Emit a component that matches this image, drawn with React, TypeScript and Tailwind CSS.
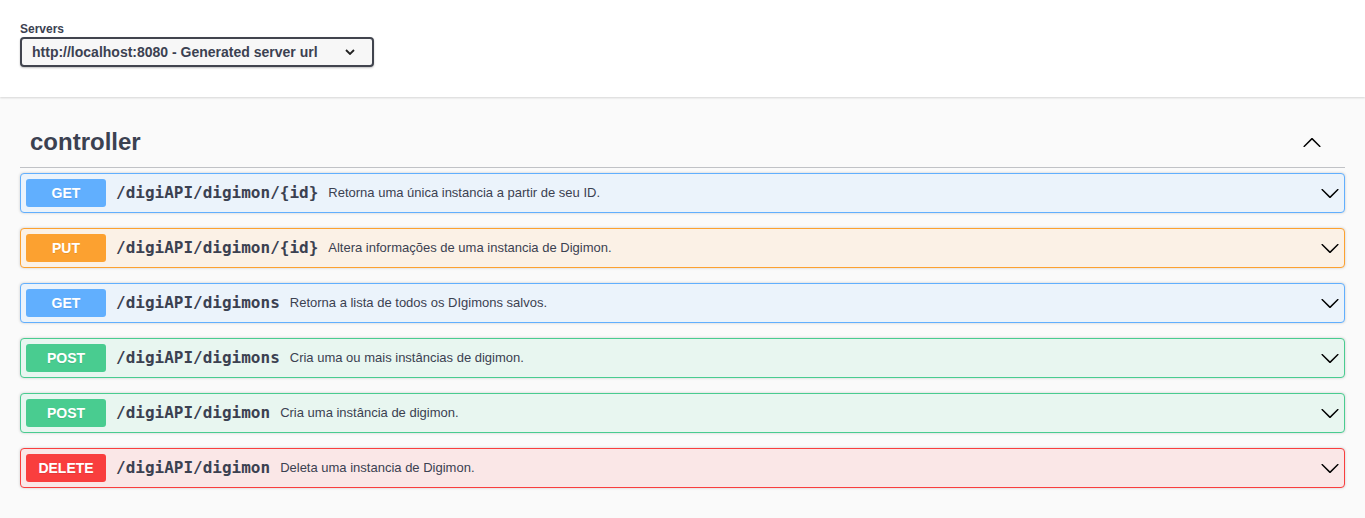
import React from "react";

type Op = {
  method: string;
  path: string;
  desc: string;
  border: string;
  bg: string;
  badge: string;
};

const ops: Op[] = [
  { method: "GET", path: "/digiAPI/digimon/{id}", desc: "Retorna uma única instancia a partir de seu ID.", border: "border-[#61affe]", bg: "bg-[#ebf3fb]", badge: "bg-[#61affe]" },
  { method: "PUT", path: "/digiAPI/digimon/{id}", desc: "Altera informações de uma instancia de Digimon.", border: "border-[#fca130]", bg: "bg-[#fbf1e6]", badge: "bg-[#fca130]" },
  { method: "GET", path: "/digiAPI/digimons", desc: "Retorna a lista de todos os DIgimons salvos.", border: "border-[#61affe]", bg: "bg-[#ebf3fb]", badge: "bg-[#61affe]" },
  { method: "POST", path: "/digiAPI/digimons", desc: "Cria uma ou mais instâncias de digimon.", border: "border-[#49cc90]", bg: "bg-[#e8f6f0]", badge: "bg-[#49cc90]" },
  { method: "POST", path: "/digiAPI/digimon", desc: "Cria uma instância de digimon.", border: "border-[#49cc90]", bg: "bg-[#e8f6f0]", badge: "bg-[#49cc90]" },
  { method: "DELETE", path: "/digiAPI/digimon", desc: "Deleta uma instancia de Digimon.", border: "border-[#f93e3e]", bg: "bg-[#fae7e7]", badge: "bg-[#f93e3e]" },
];

function ArrowDown() {
  return (
    <svg width="20" height="20" viewBox="0 0 20 20" className="shrink-0">
      <path
        fill="#000"
        d="M17.418 6.109c.272-.268.709-.268.979 0s.271.701 0 .969l-7.908 7.83c-.27.268-.707.268-.979 0l-7.908-7.83c-.27-.268-.27-.701 0-.969.271-.268.709-.268.979 0L10 13.25l7.418-7.141z"
      />
    </svg>
  );
}

function ArrowUp() {
  return (
    <svg width="20" height="20" viewBox="0 0 20 20" className="shrink-0">
      <path
        fill="#000"
        d="M17.418 14.908c.272.268.709.268.979 0s.271-.701 0-.969l-7.908-7.83c-.27-.268-.707-.268-.979 0l-7.908 7.83c-.27.268-.27.701 0 .969.271.268.709.268.979 0L10 7.767l7.418 7.141z"
      />
    </svg>
  );
}

export default function App() {
  return (
    <div className="min-h-screen bg-[#fafafa] font-['Liberation_Sans',Arial,sans-serif] text-[#3b4151]">
      <div className="bg-white shadow-[0_1px_2px_0_rgba(0,0,0,0.15)] px-5 pt-[19px] pb-[30px]">
        <div className="text-[12px] font-bold leading-[18px] translate-y-[1px]">Servers</div>
        <div className="w-[354px] h-[30px] border-2 border-[#41444e] rounded bg-[#f7f7f7] shadow-[0_1px_2px_0_rgba(0,0,0,0.25)] flex items-center pl-[10px] pr-[17px] text-[14px] font-bold">
          <span className="flex-1 leading-[18px]">http://localhost:8080 - Generated server url</span>
          <svg width="10" height="6" viewBox="0 0 10 6" className="shrink-0">
            <path d="M1 1l4 4 4-4" fill="none" stroke="#222" strokeWidth="1.8" />
          </svg>
        </div>
      </div>
      <div className="px-5 pt-[14px] pb-5">
        <div className="flex items-center border-b border-[rgba(59,65,81,0.3)] pt-[13px] pb-[7px] pl-[10px] pr-[23px]">
          <h3 className="flex-1 text-[24px] font-bold leading-[36px]">controller</h3>
          <ArrowUp />
        </div>
        <div className="mt-[5px] flex flex-col gap-[15px]">
          {ops.map((op, i) => (
            <div
              key={i}
              className={`border ${op.border} ${op.bg} rounded shadow-[0_0_3px_rgba(0,0,0,0.19)] flex items-center pl-[5px] pr-[4px] py-[5px]`}
            >
              <div
                className={`${op.badge} w-[80px] py-[6px] rounded-[3px] text-center text-white text-[14px] font-bold leading-[16px] [text-shadow:0_1px_0_rgba(0,0,0,0.1)]`}
              >
                {op.method}
              </div>
              <span className="px-[10px] font-['DejaVu_Sans_Mono',monospace] text-[16px] font-bold">
                {op.path}
              </span>
              <span className="flex-1 text-[13px]">{op.desc}</span>
              <ArrowDown />
            </div>
          ))}
        </div>
      </div>
    </div>
  );
}
